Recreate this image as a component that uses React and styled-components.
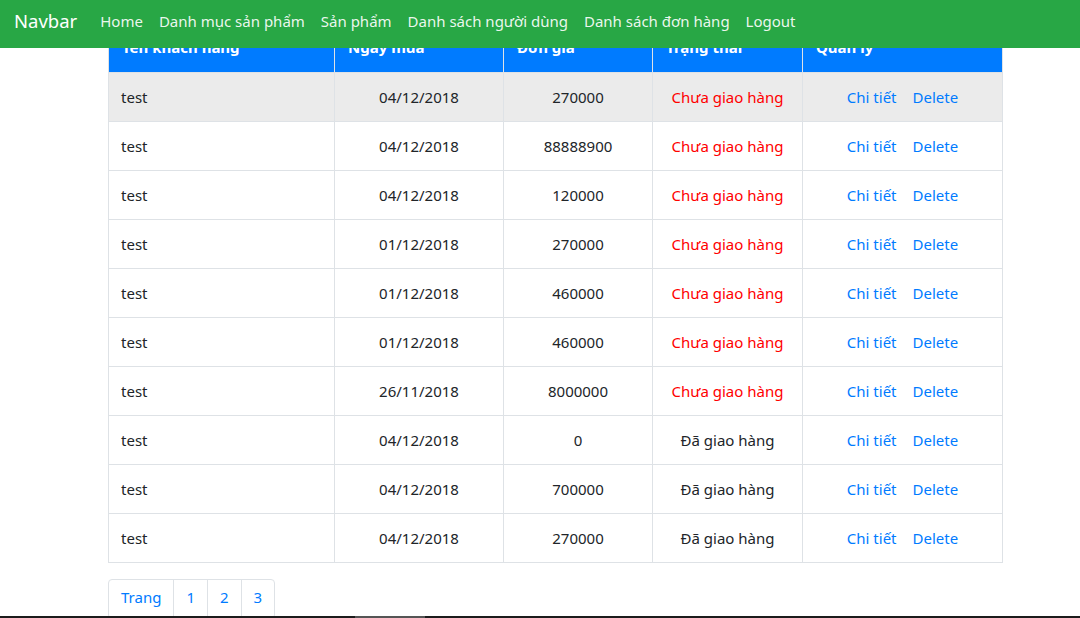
import React from 'react'
import styled, { createGlobalStyle } from 'styled-components'

const orders = [
	{ name: 'test', date: '04/12/2018', price: '270000', done: false },
	{ name: 'test', date: '04/12/2018', price: '88888900', done: false },
	{ name: 'test', date: '04/12/2018', price: '120000', done: false },
	{ name: 'test', date: '01/12/2018', price: '270000', done: false },
	{ name: 'test', date: '01/12/2018', price: '460000', done: false },
	{ name: 'test', date: '01/12/2018', price: '460000', done: false },
	{ name: 'test', date: '26/11/2018', price: '8000000', done: false },
	{ name: 'test', date: '04/12/2018', price: '0', done: true },
	{ name: 'test', date: '04/12/2018', price: '700000', done: true },
	{ name: 'test', date: '04/12/2018', price: '270000', done: true },
]

const links = [
	'Home',
	'Danh mục sản phẩm',
	'Sản phẩm',
	'Danh sách người dùng',
	'Danh sách đơn hàng',
	'Logout',
]

const App = () => {
	return (
		<>
			<GlobalStyle />
			<Navbar>
				<Brand>Navbar</Brand>
				<NavLinks>
					{links.map((l) => (
						<NavLink key={l}>{l}</NavLink>
					))}
				</NavLinks>
			</Navbar>
			<Main>
				<Table>
					<colgroup>
						<col style={{ width: 226 }} />
						<col style={{ width: 169 }} />
						<col style={{ width: 149 }} />
						<col style={{ width: 150 }} />
						<col style={{ width: 200 }} />
					</colgroup>
					<thead>
						<tr>
							<Th>Tên khách hàng</Th>
							<Th>Ngày mua</Th>
							<Th>Đơn giá</Th>
							<Th>Trạng thái</Th>
							<Th>Quản lý</Th>
						</tr>
					</thead>
					<tbody>
						{orders.map((o, i) => (
							<Row key={i} $hover={i === 0}>
								<Td>{o.name}</Td>
								<Td $center>{o.date}</Td>
								<Td $center>{o.price}</Td>
								<Td $center>
									<Status $done={o.done}>
										{o.done ? 'Đã giao hàng' : 'Chưa giao hàng'}
									</Status>
								</Td>
								<Td $center>
									<Action>Chi tiết</Action>
									<Action>Delete</Action>
								</Td>
							</Row>
						))}
					</tbody>
				</Table>
				<Pagination>
					<PageItem>Trang</PageItem>
					<PageItem>1</PageItem>
					<PageItem>2</PageItem>
					<PageItem>3</PageItem>
				</Pagination>
			</Main>
			<BottomEdge>
				<span />
			</BottomEdge>
		</>
	)
}

const GlobalStyle = createGlobalStyle`
	* {
		box-sizing: border-box;
	}
	body {
		margin: 0;
		font-family: 'Noto Sans', 'Liberation Sans', sans-serif;
		font-size: 15px;
		line-height: 24px;
		color: #212529;
		background: #fff;
		overflow: hidden;
	}
`

const Navbar = styled.nav`
	position: fixed;
	top: 0;
	left: 0;
	right: 0;
	height: 48px;
	background: #28a745;
	display: flex;
	align-items: center;
	padding: 0 16px 0 14px;
	z-index: 10;
`

const Brand = styled.a`
	color: #fff;
	font-size: 18.5px;
	line-height: 30px;
	margin-right: 15px;
	padding-bottom: 6px;
`

const NavLinks = styled.div`
	display: flex;
	padding-bottom: 6px;
`

const NavLink = styled.a`
	color: rgba(255, 255, 255, 0.92);
	padding: 0 8px;
	white-space: nowrap;
`

const Main = styled.main`
	padding: 23px 0 0 108px;
`

const Table = styled.table`
	width: 894px;
	border-collapse: collapse;
	table-layout: fixed;
`

const Th = styled.th`
	background: #007bff;
	color: #fff;
	font-weight: 700;
	text-align: left;
	padding: 12px 12px 12px 13px;
	height: 49px;
	border: 1px solid #dee2e6;
	border-top: none;
`

const Row = styled.tr`
	background: ${(p) => (p.$hover ? '#ebebeb' : '#fff')};
`

const Td = styled.td`
	padding: 12px;
	height: 49px;
	border: 1px solid #dee2e6;
	text-align: ${(p) => (p.$center ? 'center' : 'left')};
	white-space: nowrap;
`

const Status = styled.span`
	color: ${(p) => (p.$done ? '#212529' : '#ff0000')};
`

const Action = styled.a`
	color: #007bff;
	margin: 0 8px;
`

const Pagination = styled.ul`
	display: flex;
	list-style: none;
	margin: 16px 0 0;
	padding: 0;
`

const PageItem = styled.li`
	color: #007bff;
	padding: 5px 12px 9px;
	line-height: 24px;
	border: 1px solid #dee2e6;
	margin-left: -1px;
	&:first-child {
		margin-left: 0;
		border-radius: 4px 0 0 4px;
	}
	&:last-child {
		border-radius: 0 4px 4px 0;
	}
`

const BottomEdge = styled.div`
	position: fixed;
	left: 0;
	right: 0;
	bottom: 0;
	height: 2px;
	background: #1c1c1c;
	z-index: 20;
	span {
		position: absolute;
		left: 355px;
		width: 70px;
		top: 0;
		bottom: 0;
		background: #555;
	}
`

export default App
